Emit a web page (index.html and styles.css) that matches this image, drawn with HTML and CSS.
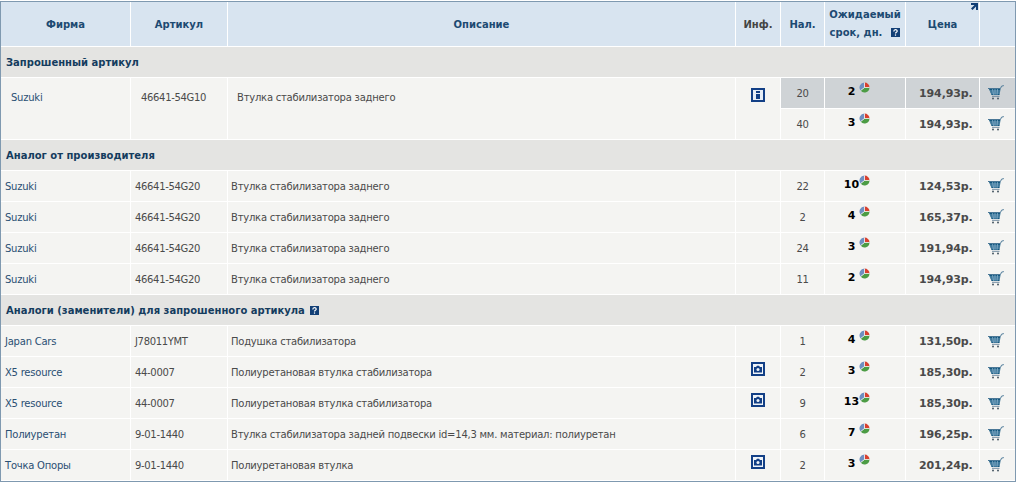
FILE: index.html
```html
<!DOCTYPE html>
<html lang="ru">
<head>
<meta charset="utf-8">
<title>Результаты поиска</title>
<link rel="stylesheet" href="styles.css">
</head>
<body>
<svg class="defs" width="0" height="0" aria-hidden="true">
  <defs>
    <symbol id="i-pie" viewBox="0 0 11 11">
      <path d="M5.500 5.500V.5A5 5 0 0 1 10.500 5.500Z" fill="#d8402f"/>
      <path d="M5.500 5.500H10.500A5 5 0 0 1 1.600 8.600Z" fill="#4c9c45"/>
      <path d="M5.500 5.500L1.600 8.600A5 5 0 0 1 5.500 .5Z" fill="#6f8fc0"/>
      <path d="M5.500 5.500h5M5.500 5.500V.5M5.500 5.500L1.600 8.600" stroke="#fff" stroke-width=".7"/>
    </symbol>
    <symbol id="i-cart" viewBox="0 0 16 15">
      <path d="M0 3.500H12.500L13.500 1.200 15.800.6" fill="none" stroke="#4a7796" stroke-width="1"/>
      <path d="M1 4H12.500L11.500 10H3.500Z" fill="#14587f"/>
      <path d="M2 6H12M3 8H12M4.500 4L5.500 10M7 4V10M9.500 4L9 10" stroke="#a9cbe0" stroke-width=".6" fill="none"/>
      <path d="M4 11.300H11.500" stroke="#50708c" stroke-width=".8"/>
      <circle cx="5" cy="13.500" r="1" fill="#4a5a66"/>
      <circle cx="10" cy="13.500" r="1" fill="#4a5a66"/>
    </symbol>
    <symbol id="i-info" viewBox="0 0 14 14">
      <rect width="14" height="14" fill="#123f86"/>
      <rect x="2" y="2" width="10" height="10" fill="#e6edf6"/>
      <path d="M5 3h4v2H5zM5 6h4v5H5z" fill="#123f86"/>
    </symbol>
    <symbol id="i-photo" viewBox="0 0 14 14">
      <rect width="14" height="14" fill="#123f86"/>
      <rect x="2" y="2" width="10" height="10" fill="#eef3f8"/>
      <path d="M3 5h2l1-1.200h2l1 1.200h2v5.500H3z" fill="#123f86"/>
      <circle cx="7" cy="7.600" r="1.500" fill="#eef3f8"/>
    </symbol>
    <symbol id="i-help" viewBox="0 0 9 9">
      <rect width="9" height="9" fill="#123f76"/>
      <path d="M2.800 3.400C2.800 1 6.200 1 6.200 3.200 6.200 4.400 4.500 4.300 4.500 5.600" fill="none" stroke="#fff" stroke-width="1.200"/>
      <rect x="3.900" y="6.400" width="1.200" height="1.300" fill="#fff"/>
    </symbol>
  </defs>
</svg>
<table class="grid">
  <colgroup>
    <col class="c-firm"><col class="c-art"><col class="c-desc"><col class="c-inf"><col class="c-qty"><col class="c-term"><col class="c-price"><col class="c-cart">
  </colgroup>
  <thead>
    <tr>
      <th>Фирма</th><th>Артикул</th><th>Описание</th><th class="dark">Инф.</th><th>Нал.</th>
      <th class="term">Ожидаемый<br>срок, дн.<svg class="help wide"><use href="#i-help"/></svg></th>
      <th class="price-head">Цена<svg class="sort" viewBox="0 0 7 7"><path d="M0 0H7V7H5V3.500L1.500 7 0 5.500 3.500 2H0Z" fill="#123f76"/></svg></th>
      <th></th>
    </tr>
  </thead>
  <tbody>
    <tr class="section"><td colspan="8">Запрошенный артикул</td></tr>
    <tr class="hl">
      <td class="firm req" rowspan="2">Suzuki</td>
      <td class="art req" rowspan="2">46641-54G10</td>
      <td class="desc req" rowspan="2">Втулка стабилизатора заднего</td>
      <td class="inf top" rowspan="2"><svg class="ico"><use href="#i-info"/></svg></td>
      <td class="qty sel">20</td><td class="term-c sel"><b>2</b><svg class="pie"><use href="#i-pie"/></svg></td><td class="price sel">194,93р.</td><td class="cart sel"><svg class="cart-i"><use href="#i-cart"/></svg></td>
    </tr>
    <tr><td class="qty">40</td><td class="term-c"><b>3</b><svg class="pie"><use href="#i-pie"/></svg></td><td class="price">194,93р.</td><td class="cart"><svg class="cart-i"><use href="#i-cart"/></svg></td></tr>

    <tr class="section"><td colspan="8">Аналог от производителя</td></tr>
    <tr><td class="firm">Suzuki</td><td class="art">46641-54G20</td><td class="desc">Втулка стабилизатора заднего</td><td class="inf"></td><td class="qty">22</td><td class="term-c"><b>10</b><svg class="pie"><use href="#i-pie"/></svg></td><td class="price">124,53р.</td><td class="cart"><svg class="cart-i"><use href="#i-cart"/></svg></td></tr>
    <tr><td class="firm">Suzuki</td><td class="art">46641-54G20</td><td class="desc">Втулка стабилизатора заднего</td><td class="inf"></td><td class="qty">2</td><td class="term-c"><b>4</b><svg class="pie"><use href="#i-pie"/></svg></td><td class="price">165,37р.</td><td class="cart"><svg class="cart-i"><use href="#i-cart"/></svg></td></tr>
    <tr><td class="firm">Suzuki</td><td class="art">46641-54G20</td><td class="desc">Втулка стабилизатора заднего</td><td class="inf"></td><td class="qty">24</td><td class="term-c"><b>3</b><svg class="pie"><use href="#i-pie"/></svg></td><td class="price">191,94р.</td><td class="cart"><svg class="cart-i"><use href="#i-cart"/></svg></td></tr>
    <tr><td class="firm">Suzuki</td><td class="art">46641-54G20</td><td class="desc">Втулка стабилизатора заднего</td><td class="inf"></td><td class="qty">11</td><td class="term-c"><b>2</b><svg class="pie"><use href="#i-pie"/></svg></td><td class="price">194,93р.</td><td class="cart"><svg class="cart-i"><use href="#i-cart"/></svg></td></tr>

    <tr class="section"><td colspan="8">Аналоги (заменители) для запрошенного артикула <svg class="help"><use href="#i-help"/></svg></td></tr>
    <tr><td class="firm">Japan Cars</td><td class="art">J78011YMT</td><td class="desc">Подушка стабилизатора</td><td class="inf"></td><td class="qty">1</td><td class="term-c"><b>4</b><svg class="pie"><use href="#i-pie"/></svg></td><td class="price">131,50р.</td><td class="cart"><svg class="cart-i"><use href="#i-cart"/></svg></td></tr>
    <tr><td class="firm">X5 resource</td><td class="art">44-0007</td><td class="desc">Полиуретановая втулка стабилизатора</td><td class="inf"><svg class="ico"><use href="#i-photo"/></svg></td><td class="qty">2</td><td class="term-c"><b>3</b><svg class="pie"><use href="#i-pie"/></svg></td><td class="price">185,30р.</td><td class="cart"><svg class="cart-i"><use href="#i-cart"/></svg></td></tr>
    <tr><td class="firm">X5 resource</td><td class="art">44-0007</td><td class="desc">Полиуретановая втулка стабилизатора</td><td class="inf"><svg class="ico"><use href="#i-photo"/></svg></td><td class="qty">9</td><td class="term-c"><b>13</b><svg class="pie"><use href="#i-pie"/></svg></td><td class="price">185,30р.</td><td class="cart"><svg class="cart-i"><use href="#i-cart"/></svg></td></tr>
    <tr><td class="firm">Полиуретан</td><td class="art">9-01-1440</td><td class="desc">Втулка стабилизатора задней подвески id=14,3 мм. материал: полиуретан</td><td class="inf"></td><td class="qty">6</td><td class="term-c"><b>7</b><svg class="pie"><use href="#i-pie"/></svg></td><td class="price">196,25р.</td><td class="cart"><svg class="cart-i"><use href="#i-cart"/></svg></td></tr>
    <tr><td class="firm">Точка Опоры</td><td class="art">9-01-1440</td><td class="desc">Полиуретановая втулка</td><td class="inf"><svg class="ico"><use href="#i-photo"/></svg></td><td class="qty">2</td><td class="term-c"><b>3</b><svg class="pie"><use href="#i-pie"/></svg></td><td class="price">201,24р.</td><td class="cart"><svg class="cart-i"><use href="#i-cart"/></svg></td></tr>
  </tbody>
</table>
</body>
</html>
```
FILE: styles.css
```css
html, body { margin: 0; padding: 0; background: #fff; }
.defs { position: absolute; }
.grid {
  width: 1016px;
  height: 481px;
  margin-top: 1px;
  table-layout: fixed;
  border-collapse: separate;
  border-spacing: 0;
  border: 1px solid #7f99b0;
  font: 10px "DejaVu Sans", sans-serif;
  color: #4a4a4a;
}
.c-firm { width: 130px; }
.c-art { width: 97px; }
.c-desc { width: 508px; }
.c-inf { width: 45px; }
.c-qty { width: 44px; }
.c-term { width: 81px; }
.c-price { width: 74px; }
.c-cart { width: 35px; }
.grid th, .grid td { padding: 0; border-right: 1px solid #fff; border-bottom: 1px solid #fff; box-sizing: border-box; }
.grid th:last-child, .grid td:last-child { border-right: 0; }
thead tr { height: 45px; }
tbody tr { height: 31px; }
.grid th { background: #d8e4f0; color: #1d4a72; font-weight: bold; text-align: center; }
.grid th.dark { color: #444; }
.grid th.term { line-height: 18px; }
.grid th.price-head { position: relative; }
.sort { position: absolute; right: 1px; top: 1px; width: 7px; height: 7px; }
.help { width: 9px; height: 9px; vertical-align: -1px; margin-left: 2px; }
.help.wide { margin-left: 9px; }
.grid .section td { background: #e4e4e2; color: #143c5e; font-weight: bold; padding-left: 5px; border-right: 0; }
.grid td { background: #f4f4f2; }
.firm, .art, .desc { letter-spacing: -0.23px; }
.art { letter-spacing: -0.33px; }
.firm { color: #2a4f73; padding-left: 4px !important; }
.art { padding-left: 4px !important; }
.desc { padding-left: 3px !important; }
.req { vertical-align: top; padding-top: 14px !important; }
.firm.req { padding-left: 10px !important; }
.art.req { padding-left: 10px !important; }
.desc.req { padding-left: 9px !important; }
.inf { text-align: center; }
.inf.top { vertical-align: top; padding-top: 10px !important; }
.ico { width: 14px; height: 14px; display: block; margin: -6px auto 0; }
.inf.top .ico { margin-top: 0; }
.qty { text-align: center; letter-spacing: -0.3px; }
.term-c { color: #000; }
.term-c b { display: inline-block; width: 53px; text-align: center; font-size: 11px; position: relative; top: -4px; }
.pie { width: 11px; height: 11px; margin-left: -19px; vertical-align: 4px; position: relative; top: -2px; }
.price { font-weight: bold; font-size: 11px; letter-spacing: -0.1px; padding-left: 13px !important; }
.cart-i { width: 16px; height: 15px; display: block; margin: -1px 0 0 8px; }
.grid td.sel { background: #cfd3d6; }
```
